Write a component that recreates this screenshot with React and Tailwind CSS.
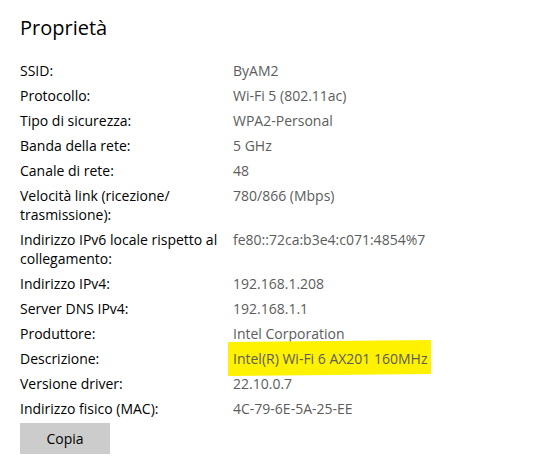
import React from 'react';

const ROWS = [
  { label: 'SSID:', value: 'ByAM2' },
  { label: 'Protocollo:', value: 'Wi-Fi 5 (802.11ac)' },
  { label: 'Tipo di sicurezza:', value: 'WPA2-Personal' },
  { label: 'Banda della rete:', value: '5 GHz' },
  { label: 'Canale di rete:', value: '48' },
  { label: 'Velocità link (ricezione/ trasmissione):', value: '780/866 (Mbps)' },
  { label: 'Indirizzo IPv6 locale rispetto al collegamento:', value: 'fe80::72ca:b3e4:c071:4854%7' },
  { label: 'Indirizzo IPv4:', value: '192.168.1.208' },
  { label: 'Server DNS IPv4:', value: '192.168.1.1' },
  { label: 'Produttore:', value: 'Intel Corporation' },
  { label: 'Descrizione:', value: 'Intel(R) Wi-Fi 6 AX201 160MHz', highlight: true },
  { label: 'Versione driver:', value: '22.10.0.7' },
  { label: 'Indirizzo fisico (MAC):', value: '4C-79-6E-5A-25-EE' },
];

export default function App() {
  return (
    <div
      className="w-[534px] h-[474px] bg-white pl-5 pt-[14px] text-black overflow-hidden"
      style={{ fontFamily: '"Open Sans", "Noto Sans", sans-serif' }}
    >
      <h1 className="text-[20px] leading-[28px] font-normal">Proprietà</h1>

      <div className="mt-[19px] flex flex-col gap-[6px] text-[14px] leading-[19px]">
        {ROWS.map(({ label, value, highlight }) => (
          <div key={label} className="flex">
            <div className="w-[208px] mr-[5px] shrink-0">{label}</div>
            <div className="relative text-[#5c5c5c]">
              {highlight && (
                <span className="absolute -left-[5px] -top-[8px] w-[203px] h-[34px] bg-[#fff200] -skew-y-[0.5deg]" />
              )}
              <span className="relative">{value}</span>
            </div>
          </div>
        ))}
      </div>

      <button className="mt-[5px] w-[90px] h-[31px] bg-[#cccccc] text-[14px] text-black">
        Copia
      </button>
    </div>
  );
}
